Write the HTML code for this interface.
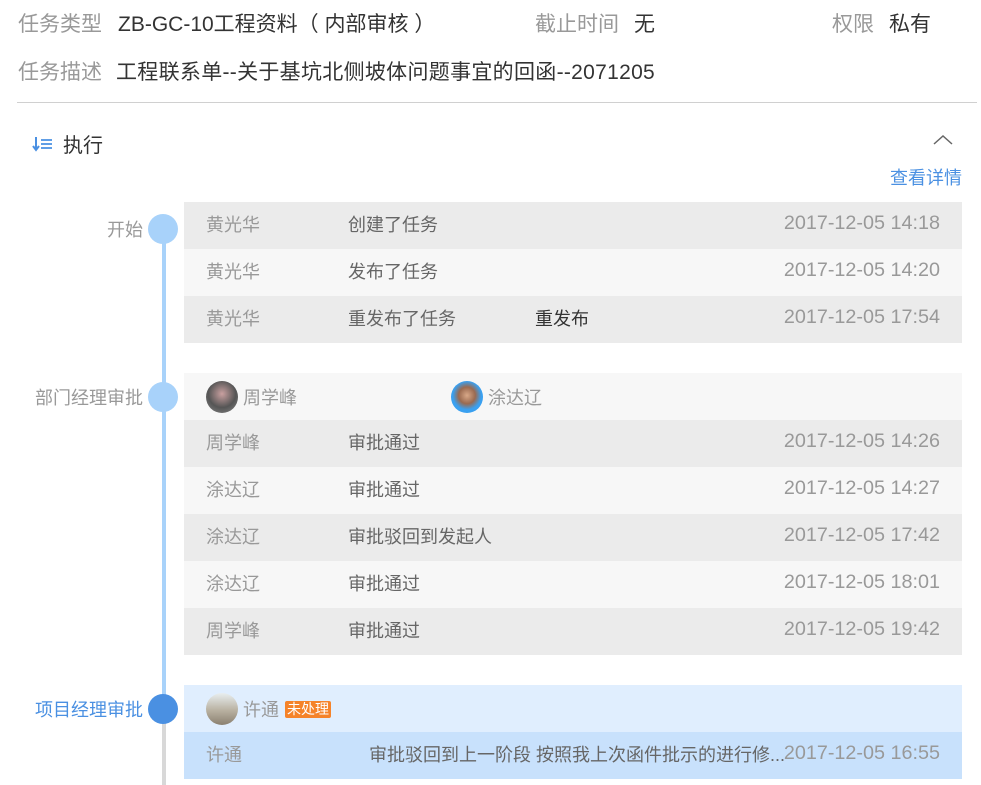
<!DOCTYPE html>
<html><head><meta charset="utf-8"><style>
*{margin:0;padding:0;box-sizing:border-box}
body{width:981px;height:785px;overflow:hidden;background:#fff;font-family:"Liberation Sans","Noto Sans CJK SC",sans-serif;position:relative;color:#333}
.a{position:absolute;white-space:nowrap}
.lb{color:#999;font-size:21px}
.v{color:#333;font-size:21px}
.row{position:absolute;left:184px;width:778px;height:47px;font-size:18px;color:#999}
.row span{position:absolute;top:9px;white-space:nowrap}
.n{left:22px}.d{left:164px;color:#666}
.row span.t{right:22px;font-size:19.8px;top:10px}
.dk{background:#ebebeb}.lt{background:#f7f7f7}
.dot{position:absolute;left:148px;width:30px;height:30px;border-radius:50%;background:#a8d2fa}
.st{position:absolute;right:838px;font-size:18px;color:#999;white-space:nowrap}
.av{position:absolute;width:32px;height:32px;border-radius:50%;top:8px}
</style></head><body>
<div class="a lb" style="left:18px;top:8px">任务类型</div>
<div class="a v" style="left:118px;top:8px">ZB-GC-10工程资料（ 内部审核 ）</div>
<div class="a lb" style="left:535px;top:8px">截止时间</div>
<div class="a v" style="left:634px;top:8px">无</div>
<div class="a lb" style="left:832px;top:8px">权限</div>
<div class="a v" style="left:889px;top:8px">私有</div>
<div class="a lb" style="left:18px;top:56px">任务描述</div>
<div class="a v" style="left:116px;top:56px;letter-spacing:0.3px">工程联系单--关于基坑北侧坡体问题事宜的回函--2071205</div>
<div class="a" style="left:17px;top:102px;width:960px;height:1px;background:#d0d0d0"></div>
<svg class="a" style="left:32px;top:136px" width="22" height="16" viewBox="0 0 22 16"><path d="M4 1v12M1 10l3 4 3-4" stroke="#4a90e2" stroke-width="2" fill="none"/><path d="M9 4h11M9 8h11M9 12h11" stroke="#4a90e2" stroke-width="1.8"/></svg>
<div class="a" style="left:63px;top:129px;font-size:20px;color:#333">执行</div>
<svg class="a" style="left:933px;top:134px" width="20" height="12"><path d="M1 10L10 2l9 8" stroke="#666" stroke-width="1.5" fill="none"/></svg>
<div class="a" style="left:890px;top:164px;font-size:18px;color:#4a90e2">查看详情</div>

<div class="a" style="left:162px;top:229px;width:4px;height:480px;background:#a8d2fa"></div>
<div class="a" style="left:162px;top:709px;width:4px;height:76px;background:#d8d8d8"></div>

<div class="dot" style="top:214px"></div><div class="st" style="top:216px">开始</div>
<div class="row dk" style="top:202px"><span class="n">黄光华</span><span class="d">创建了任务</span><span class="t">2017-12-05 14:18</span></div>
<div class="row lt" style="top:249px"><span class="n">黄光华</span><span class="d">发布了任务</span><span class="t">2017-12-05 14:20</span></div>
<div class="row dk" style="top:296px"><span class="n">黄光华</span><span class="d">重发布了任务</span><span class="d" style="left:351px;color:#333">重发布</span><span class="t">2017-12-05 17:54</span></div>

<div class="dot" style="top:382px"></div><div class="st" style="top:384px">部门经理审批</div>
<div class="row lt" style="top:373px"><div class="av" style="left:22px;background:radial-gradient(circle at 50% 40%,#c9a0a0 0,#555 55%,#888 100%)"></div><span style="left:59px;top:11px">周学峰</span><div class="av" style="left:267px;background:radial-gradient(circle at 50% 45%,#d8a888 0,#9a6a50 35%,#3aa0f0 60%)"></div><span style="left:304px;top:11px">涂达辽</span></div>
<div class="row dk" style="top:420px"><span class="n">周学峰</span><span class="d">审批通过</span><span class="t">2017-12-05 14:26</span></div>
<div class="row lt" style="top:467px"><span class="n">涂达辽</span><span class="d">审批通过</span><span class="t">2017-12-05 14:27</span></div>
<div class="row dk" style="top:514px"><span class="n">涂达辽</span><span class="d">审批驳回到发起人</span><span class="t">2017-12-05 17:42</span></div>
<div class="row lt" style="top:561px"><span class="n">涂达辽</span><span class="d">审批通过</span><span class="t">2017-12-05 18:01</span></div>
<div class="row dk" style="top:608px"><span class="n">周学峰</span><span class="d">审批通过</span><span class="t">2017-12-05 19:42</span></div>

<div class="dot" style="top:694px;background:#4a90e2"></div><div class="st" style="top:696px;color:#4a90e2">项目经理审批</div>
<div class="row" style="top:685px;background:#e0eefe"><div class="av" style="left:22px;background:linear-gradient(#e8eef0,#b8b0a0 55%,#8a8070)"></div><span style="left:59px;top:11px">许通</span><span style="left:101px;top:16px;background:#f5832a;color:#fff;font-size:14px;line-height:17px;padding:0 2px;border-radius:2px">未处理</span></div>
<div class="row" style="top:732px;background:#c8e1fc"><span class="n">许通</span><span style="left:185px;color:#666">审批驳回到上一阶段 按照我上次函件批示的进行修...</span><span class="t">2017-12-05 16:55</span></div>
</body></html>
